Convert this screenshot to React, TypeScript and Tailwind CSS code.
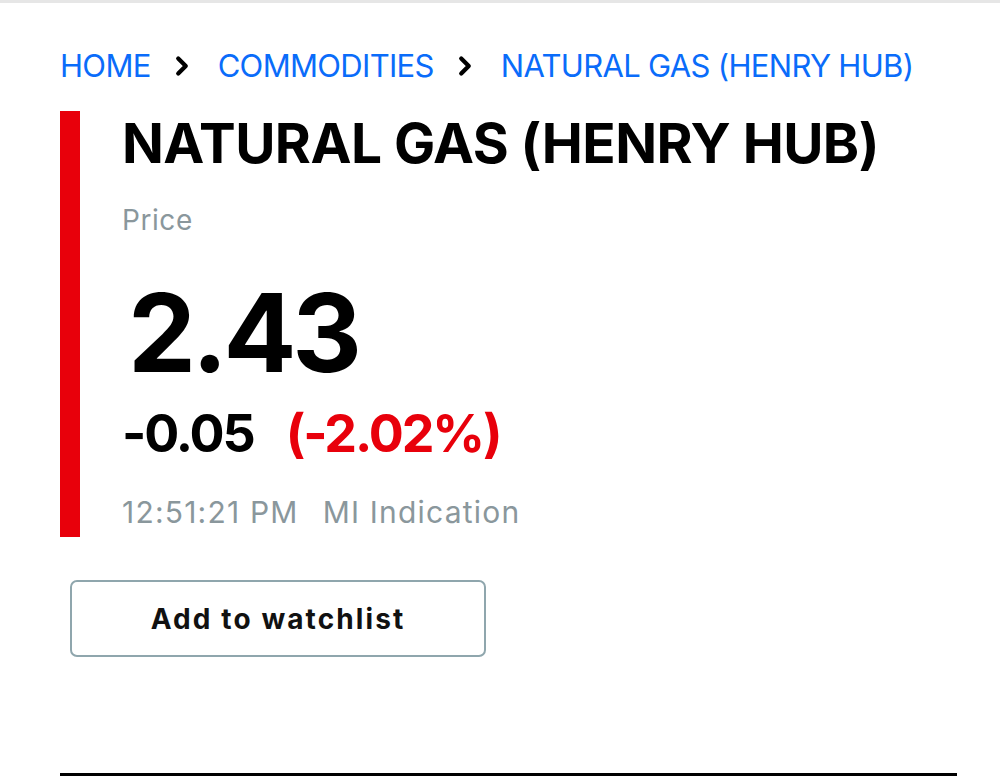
import { ChevronRight } from 'lucide-react'

const crumbs = ['HOME', 'COMMODITIES', 'NATURAL GAS (HENRY HUB)']

export default function App() {
  return (
    <div className="min-h-[779px] w-[1000px] border-t-[3px] border-[#e6e6e6] bg-white font-['Inter',sans-serif]">
      <div className="pl-[60px] pr-[43px]">
        {/* Breadcrumb */}
        <nav className="flex items-center pt-[43px] text-[31px] leading-[40px] tracking-[-0.022em] text-[#0a6cfa]">
          {crumbs.map((c, i) => (
            <span key={c} className="flex items-center">
              {i > 0 && (
                <ChevronRight className="ml-[16px] mr-[21px] size-[30px] text-black" strokeWidth={3.4} />
              )}
              <span>{c}</span>
            </span>
          ))}
        </nav>

        {/* Quote block */}
        <div className="mt-[25px] flex h-[426px] border-l-[20px] border-[#e8000b] pl-[42px]">
          <div className="flex flex-col">
            <h1 className="pt-[2px] text-[55px] font-bold leading-[60px] tracking-[-0.01em] text-black">
              NATURAL GAS (HENRY HUB)
            </h1>
            <p className="mt-[29px] text-[28px] leading-[36px] tracking-[0.02em] text-[#8a979c]">Price</p>
            <p className="mt-[40px] pl-[6px] text-[108px] font-bold leading-[110px] tracking-[-0.04em] text-black">
              2.43
            </p>
            <div className="mt-[16px] flex items-baseline text-[52px] font-bold leading-[60px] tracking-[-0.04em]">
              <span className="text-black">-0.05</span>
              <span className="ml-[32px] text-[#e8000b]">(-2.02%)</span>
            </div>
            <div className="mt-[30px] flex text-[30px] leading-[36px] tracking-[0.04em] text-[#8a979c]">
              <span>12:51:21 PM</span>
              <span className="ml-[24px]">MI Indication</span>
            </div>
          </div>
        </div>

        {/* Watchlist button */}
        <button className="ml-[10px] mt-[43px] flex h-[77px] w-[416px] items-center justify-center rounded-[7px] border-2 border-[#8fa6ad] text-[28px] font-bold tracking-[0.075em] text-[#111]">
          Add to watchlist
        </button>

        <div className="mt-[116px] h-[3px] bg-black" />
      </div>
    </div>
  )
}
